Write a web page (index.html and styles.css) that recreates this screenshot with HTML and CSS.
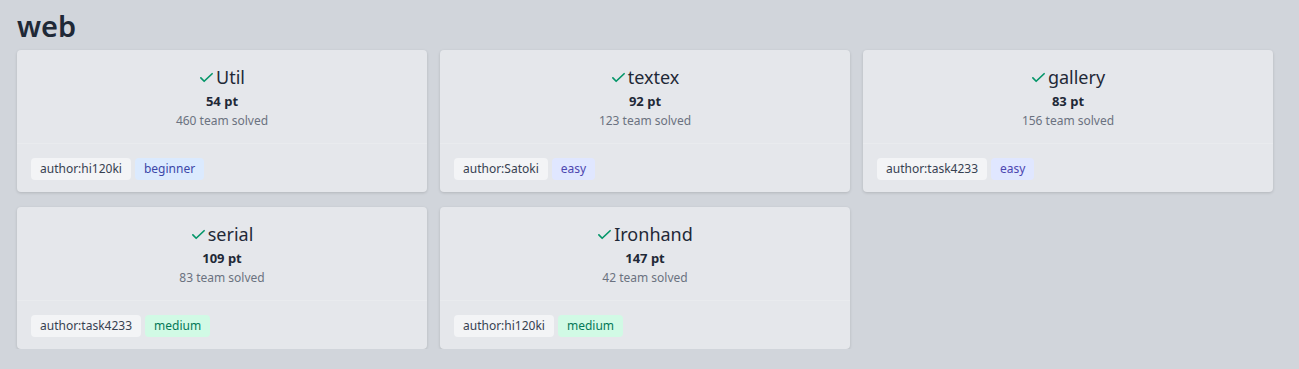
FILE: index.html
```html
<!DOCTYPE html>
<html lang="en">
<head>
  <meta charset="UTF-8">
  <meta name="viewport" content="width=device-width, initial-scale=1.0">
  <title>Challenges</title>
  <link rel="stylesheet" href="styles.css">
</head>
<body>
  <section class="category">
    <h1 class="category-title">web</h1>
    <div class="challenge-grid">

      <div class="challenge-card">
        <div class="card-body">
          <div class="challenge-name"><svg class="check" viewBox="0 0 16 16"><path d="M2 8.5l3.5 3.5L14 4"/></svg>Util</div>
          <div class="challenge-points">54 pt</div>
          <div class="challenge-solves">460 team solved</div>
        </div>
        <div class="card-footer">
          <span class="tag tag-author">author:hi120ki</span>
          <span class="tag tag-beginner">beginner</span>
        </div>
      </div>

      <div class="challenge-card">
        <div class="card-body">
          <div class="challenge-name"><svg class="check" viewBox="0 0 16 16"><path d="M2 8.5l3.5 3.5L14 4"/></svg>textex</div>
          <div class="challenge-points">92 pt</div>
          <div class="challenge-solves">123 team solved</div>
        </div>
        <div class="card-footer">
          <span class="tag tag-author">author:Satoki</span>
          <span class="tag tag-easy">easy</span>
        </div>
      </div>

      <div class="challenge-card">
        <div class="card-body">
          <div class="challenge-name"><svg class="check" viewBox="0 0 16 16"><path d="M2 8.5l3.5 3.5L14 4"/></svg>gallery</div>
          <div class="challenge-points">83 pt</div>
          <div class="challenge-solves">156 team solved</div>
        </div>
        <div class="card-footer">
          <span class="tag tag-author">author:task4233</span>
          <span class="tag tag-easy">easy</span>
        </div>
      </div>

      <div class="challenge-card">
        <div class="card-body">
          <div class="challenge-name"><svg class="check" viewBox="0 0 16 16"><path d="M2 8.5l3.5 3.5L14 4"/></svg>serial</div>
          <div class="challenge-points">109 pt</div>
          <div class="challenge-solves">83 team solved</div>
        </div>
        <div class="card-footer">
          <span class="tag tag-author">author:task4233</span>
          <span class="tag tag-medium">medium</span>
        </div>
      </div>

      <div class="challenge-card">
        <div class="card-body">
          <div class="challenge-name"><svg class="check" viewBox="0 0 16 16"><path d="M2 8.5l3.5 3.5L14 4"/></svg>Ironhand</div>
          <div class="challenge-points">147 pt</div>
          <div class="challenge-solves">42 team solved</div>
        </div>
        <div class="card-footer">
          <span class="tag tag-author">author:hi120ki</span>
          <span class="tag tag-medium">medium</span>
        </div>
      </div>

    </div>
  </section>
</body>
</html>
```

FILE: styles.css
```css
/* Page reset */
body, html {
  margin: 0;
  padding: 0;
  box-sizing: border-box;
}

body {
  background-color: #d1d5db;
  font-family: 'Noto Sans', 'Open Sans', sans-serif;
  color: #1f2937;
  padding: 0 26px 0 17px;
}

.category-title {
  margin: 0 0 6px;
  padding-top: 8px;
  font-size: 29px;
  line-height: 36px;
  font-weight: 600;
  color: #1f2937;
}

.challenge-grid {
  display: grid;
  grid-template-columns: repeat(3, 1fr);
  column-gap: 13px;
  row-gap: 15px;
}

.challenge-card {
  background-color: #e5e7eb;
  border-radius: 4px;
  box-shadow: 0 1px 3px rgba(0, 0, 0, 0.15);
}

.card-body {
  padding: 14px 16px 12px;
  text-align: center;
}

.challenge-name {
  font-size: 18px;
  line-height: 27px;
  color: #1f2937;
  display: flex;
  justify-content: center;
  align-items: center;
}

.check {
  width: 15px;
  height: 15px;
  margin-right: 2px;
  fill: none;
  stroke: #059669;
  stroke-width: 1.8;
  stroke-linecap: round;
  stroke-linejoin: round;
}

.challenge-points {
  font-size: 13px;
  line-height: 20px;
  font-weight: 700;
  color: #1f2937;
}

.challenge-solves {
  font-size: 12px;
  line-height: 20px;
  color: #6b7280;
}

.card-footer {
  border-top: 1px solid #e9ebee;
  padding: 14px 14px 12px;
  display: flex;
  gap: 4px;
}

.tag {
  font-size: 12px;
  line-height: 22px;
  padding: 0 9px;
  border-radius: 4px;
}

.tag-author {
  background-color: #f3f4f6;
  color: #374151;
}

.tag-beginner {
  background-color: #dbeafe;
  color: #3b47a8;
}

.tag-easy {
  background-color: #e0e7ff;
  color: #4c46b0;
}

.tag-medium {
  background-color: #d1fae5;
  color: #047857;
}
```
